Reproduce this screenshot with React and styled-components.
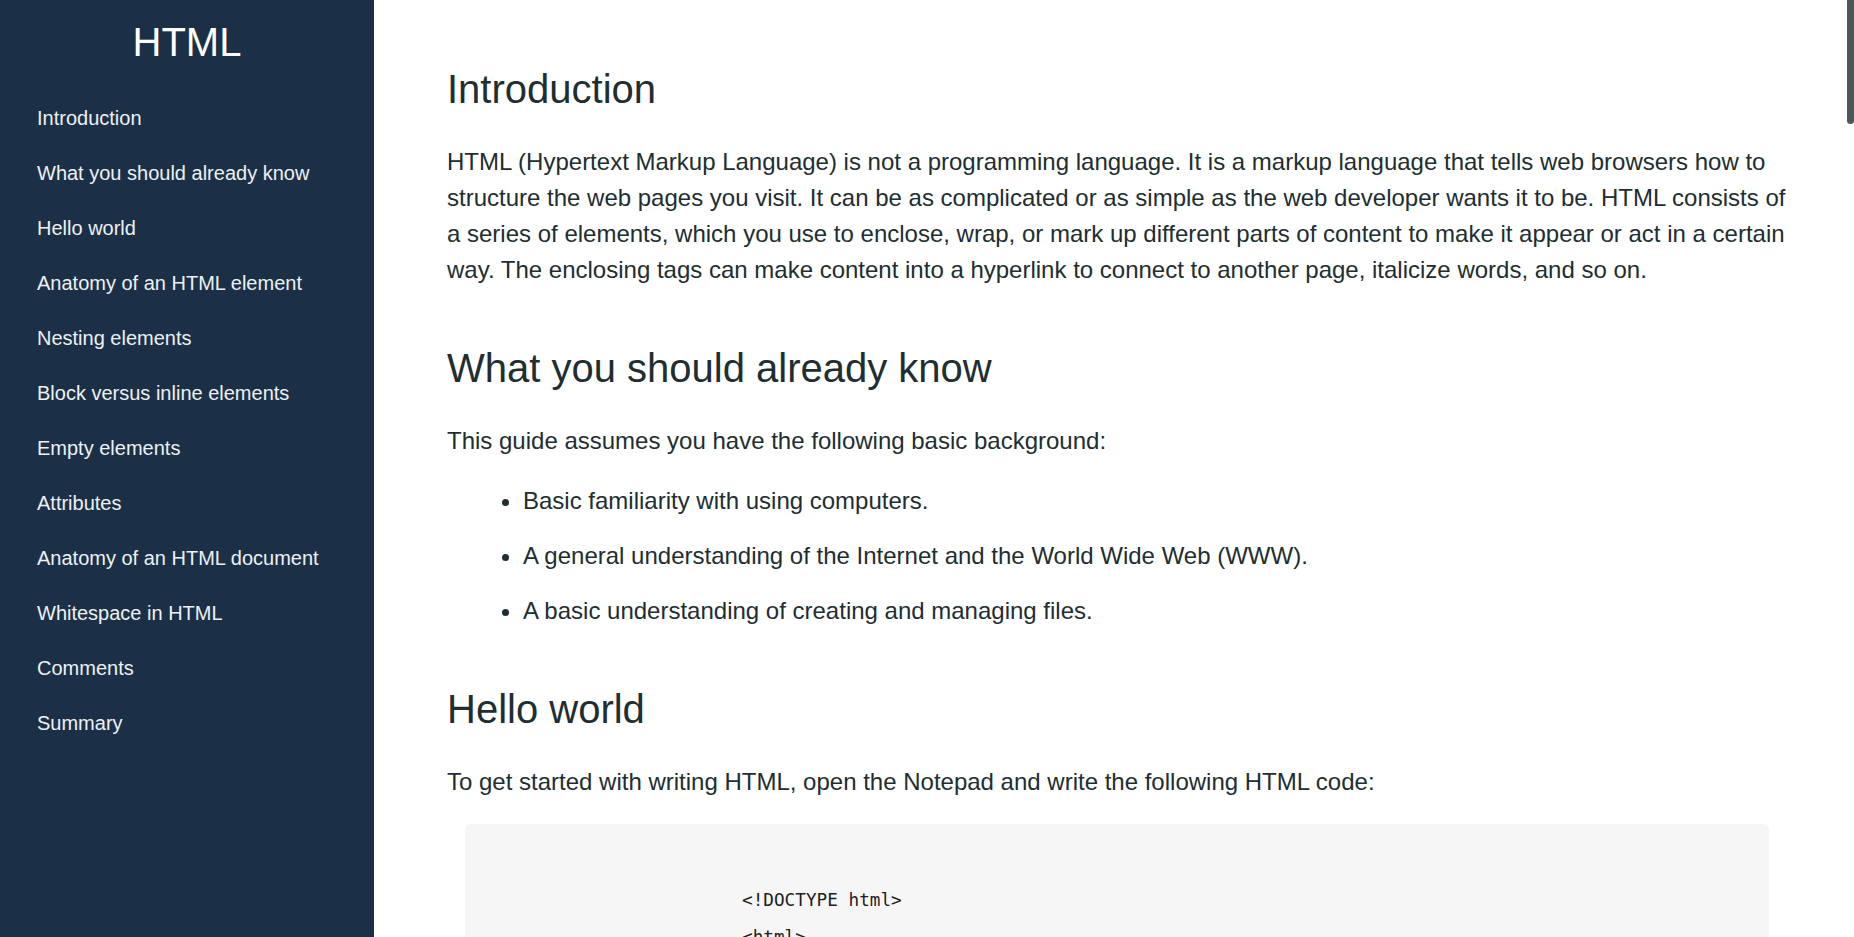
import React from 'react';
import styled, { createGlobalStyle } from 'styled-components';

const GlobalStyle = createGlobalStyle`
  html, body {
    margin: 0;
    padding: 0;
    height: 100%;
    overflow: hidden;
  }
  body {
    font-family: 'Liberation Sans', Arial, sans-serif;
  }
`;

const Layout = styled.div`
  display: flex;
  height: 100vh;
`;

const Sidebar = styled.nav`
  flex: 0 0 374px;
  height: 100vh;
  background-color: #1b3047;
  padding-top: 19px;
  box-sizing: border-box;
`;

const SideTitle = styled.h1`
  margin: 0;
  font-size: 40px;
  line-height: 46px;
  font-weight: normal;
  color: #ffffff;
  text-align: center;
`;

const NavList = styled.ul`
  list-style: none;
  margin: 26px 0 0;
  padding: 0;
`;

const NavLink = styled.a`
  display: block;
  padding: 16px 37px;
  font-size: 20px;
  line-height: 23px;
  color: #eef0f2;
  text-decoration: none;
`;

const Main = styled.main`
  position: relative;
  flex: 1;
  height: 100vh;
  overflow-y: auto;
  padding: 9px 67px 120px 73px;
  box-sizing: border-box;
  color: #212e31;
`;

// the page's scrollbar thumb, drawn over the right edge
const ScrollThumb = styled.div`
  position: fixed;
  top: 0;
  right: 0;
  width: 7px;
  height: 124px;
  background-color: #4a5858;
  border-radius: 0 0 4px 4px;
`;

const Section = styled.section``;

const Heading = styled.h2`
  margin: 57px 0 32px;
  font-size: 40px;
  line-height: 46px;
  font-weight: normal;
`;

const Text = styled.p`
  margin: 0 0 24px;
  font-size: 24px;
  line-height: 36px;
`;

const List = styled.ul`
  margin: 24px 0;
  padding-left: 76px;
`;

const Item = styled.li`
  font-size: 24px;
  line-height: 36px;
  margin-bottom: 19px;
`;

const Code = styled.pre`
  margin: 0 18px 24px;
  padding: 58px 24px 40px 277px;
  background-color: #f6f6f6;
  border-radius: 6px;
  font-family: 'DejaVu Sans Mono', 'Liberation Mono', monospace;
  font-size: 17.7px;
  line-height: 37px;
  color: #1d1d1d;
  white-space: pre;
`;

const links = [
  'Introduction',
  'What you should already know',
  'Hello world',
  'Anatomy of an HTML element',
  'Nesting elements',
  'Block versus inline elements',
  'Empty elements',
  'Attributes',
  'Anatomy of an HTML document',
  'Whitespace in HTML',
  'Comments',
  'Summary',
];

const helloCode = `<!DOCTYPE html>
<html>
  <head>
    <title>My first web page</title>
  </head>
  <body>
    <h1>Hello world</h1>
  </body>
</html>`;

const App = () => {
  return (
    <>
      <GlobalStyle />
      <Layout>
        <Sidebar>
          <SideTitle>HTML</SideTitle>
          <NavList>
            {links.map((link) => (
              <li key={link}>
                <NavLink href={'#' + link.replace(/ /g, '_')}>{link}</NavLink>
              </li>
            ))}
          </NavList>
        </Sidebar>
        <Main>
          <Section id="Introduction">
            <Heading>Introduction</Heading>
            <Text>
              HTML (Hypertext Markup Language) is not a programming language. It is a markup
              language that tells web browsers how to structure the web pages you visit. It can
              be as complicated or as simple as the web developer wants it to be. HTML consists
              of a series of elements, which you use to enclose, wrap, or mark up different parts
              of content to make it appear or act in a certain way. The enclosing tags can make
              content into a hyperlink to connect to another page, italicize words, and so on.
            </Text>
          </Section>

          <Section id="What_you_should_already_know">
            <Heading>What you should already know</Heading>
            <Text>This guide assumes you have the following basic background:</Text>
            <List>
              <Item>Basic familiarity with using computers.</Item>
              <Item>A general understanding of the Internet and the World Wide Web (WWW).</Item>
              <Item>A basic understanding of creating and managing files.</Item>
            </List>
          </Section>

          <Section id="Hello_world">
            <Heading>Hello world</Heading>
            <Text>
              To get started with writing HTML, open the Notepad and write the following HTML
              code:
            </Text>
            <Code>{helloCode}</Code>
            <Text>
              Save the file with the .html extension and open it in your browser. You will see
              the heading "Hello world" displayed on the page.
            </Text>
          </Section>

          <Section id="Anatomy_of_an_HTML_element">
            <Heading>Anatomy of an HTML element</Heading>
            <Text>The main parts of an element are as follows:</Text>
            <List>
              <Item>The opening tag: the name of the element wrapped in angle brackets.</Item>
              <Item>The content: the content of the element, which is just text here.</Item>
              <Item>The closing tag: the same as the opening tag, with a forward slash.</Item>
            </List>
            <Code>{'<p>My cat is very grumpy</p>'}</Code>
          </Section>

          <Section id="Nesting_elements">
            <Heading>Nesting elements</Heading>
            <Text>
              Elements can be placed within other elements. This is called nesting. The tags
              have to open and close in a way that they are inside or outside one another.
            </Text>
            <Code>{'<p>My cat is <strong>very</strong> grumpy.</p>'}</Code>
          </Section>

          <Section id="Block_versus_inline_elements">
            <Heading>Block versus inline elements</Heading>
            <Text>
              Block-level elements form a visible block on a page. They appear on a new line
              following the content that precedes it. Inline elements are contained within
              block-level elements and surround only small parts of the content.
            </Text>
            <Code>{`<em>first</em><em>second</em><em>third</em>

<p>fourth</p><p>fifth</p><p>sixth</p>`}</Code>
          </Section>

          <Section id="Empty_elements">
            <Heading>Empty elements</Heading>
            <Text>
              Not all elements follow the pattern of an opening tag, content, and a closing tag.
              Some elements consist of a single tag, which is typically used to insert or embed
              something in the document.
            </Text>
            <Code>{'<img src="images/firefox-icon.png" alt="Firefox icon" />'}</Code>
          </Section>

          <Section id="Attributes">
            <Heading>Attributes</Heading>
            <Text>
              Elements can also have attributes. Attributes contain extra information about the
              element that won't appear in the content.
            </Text>
            <List>
              <Item>A space between it and the element name.</Item>
              <Item>The attribute name, followed by an equal sign.</Item>
              <Item>An attribute value, wrapped with opening and closing quote marks.</Item>
            </List>
            <Code>{'<p class="editor-note">My cat is very grumpy</p>'}</Code>
          </Section>

          <Section id="Anatomy_of_an_HTML_document">
            <Heading>Anatomy of an HTML document</Heading>
            <Text>
              Individual HTML elements aren't very useful on their own. Next, let's examine how
              individual elements combine to form an entire HTML page.
            </Text>
            <Code>{`<!DOCTYPE html>
<html lang="en-US">
  <head>
    <meta charset="utf-8" />
    <title>My test page</title>
  </head>
  <body>
    <p>This is my page</p>
  </body>
</html>`}</Code>
          </Section>

          <Section id="Whitespace_in_HTML">
            <Heading>Whitespace in HTML</Heading>
            <Text>
              No matter how much whitespace you use inside HTML element content, the HTML parser
              reduces each sequence of whitespace to a single space when rendering the code.
            </Text>
            <Code>{`<p id="noWhitespace">Dogs are silly.</p>

<p id="whitespace">Dogs
    are
        silly.</p>`}</Code>
          </Section>

          <Section id="Comments">
            <Heading>Comments</Heading>
            <Text>
              HTML has a mechanism to write comments in the code. Browsers ignore comments,
              effectively making comments invisible to the user.
            </Text>
            <Code>{`<p>I'm not inside a comment</p>

<!-- <p>I am!</p> -->`}</Code>
          </Section>

          <Section id="Summary">
            <Heading>Summary</Heading>
            <Text>
              You made it to the end of the article! We hope you enjoyed your tour of the basics
              of HTML. At this point, you should understand what HTML looks like, and how it
              works at a basic level.
            </Text>
          </Section>
        </Main>
      </Layout>
      <ScrollThumb />
    </>
  );
};

export default App;
